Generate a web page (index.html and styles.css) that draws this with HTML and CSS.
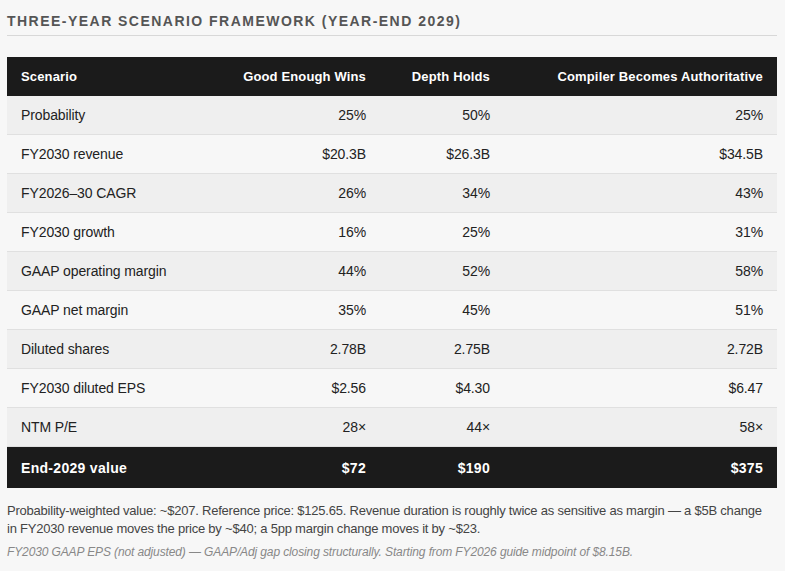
FILE: index.html
```html
<!DOCTYPE html>
<html lang="en">
<head>
<meta charset="utf-8">
<title>Three-Year Scenario Framework</title>
<link rel="stylesheet" href="styles.css">
</head>
<body>
<section class="panel">
  <h2 class="title">Three-Year Scenario Framework (Year-End 2029)</h2>
  <table class="scen">
    <colgroup>
      <col class="c1"><col class="c2"><col class="c3"><col class="c4">
    </colgroup>
    <thead>
      <tr><th class="lbl">Scenario</th><th>Good Enough Wins</th><th>Depth Holds</th><th>Compiler Becomes Authoritative</th></tr>
    </thead>
    <tbody>
      <tr><td class="lbl">Probability</td><td>25%</td><td>50%</td><td>25%</td></tr>
      <tr><td class="lbl">FY2030 revenue</td><td>$20.3B</td><td>$26.3B</td><td>$34.5B</td></tr>
      <tr><td class="lbl">FY2026–30 CAGR</td><td>26%</td><td>34%</td><td>43%</td></tr>
      <tr><td class="lbl">FY2030 growth</td><td>16%</td><td>25%</td><td>31%</td></tr>
      <tr><td class="lbl">GAAP operating margin</td><td>44%</td><td>52%</td><td>58%</td></tr>
      <tr><td class="lbl">GAAP net margin</td><td>35%</td><td>45%</td><td>51%</td></tr>
      <tr><td class="lbl">Diluted shares</td><td>2.78B</td><td>2.75B</td><td>2.72B</td></tr>
      <tr><td class="lbl">FY2030 diluted EPS</td><td>$2.56</td><td>$4.30</td><td>$6.47</td></tr>
      <tr><td class="lbl">NTM P/E</td><td>28×</td><td>44×</td><td>58×</td></tr>
    </tbody>
    <tfoot>
      <tr><td class="lbl">End-2029 value</td><td>$72</td><td>$190</td><td>$375</td></tr>
    </tfoot>
  </table>
  <p class="note">Probability-weighted value: ~$207. Reference price: $125.65. Revenue duration is roughly twice as sensitive as margin — a $5B change in FY2030 revenue moves the price by ~$40; a 5pp margin change moves it by ~$23.</p>
  <p class="fine">FY2030 GAAP EPS (not adjusted) — GAAP/Adj gap closing structurally. Starting from FY2026 guide midpoint of $8.15B.</p>
</section>
</body>
</html>
```

FILE: styles.css
```css
html, body {
  margin: 0;
  padding: 0;
  background: #f7f7f7;
}
body {
  font-family: "Liberation Sans", Arial, sans-serif;
  color: #1a1a1a;
}
.panel {
  padding: 13px 8px 0 7px;
}
.title {
  margin: 0;
  padding: 0 0 6px 0;
  font-size: 14px;
  font-weight: 700;
  letter-spacing: 1.47px;
  text-transform: uppercase;
  color: #555;
  border-bottom: 1px solid #d8d8d8;
  line-height: 16px;
}
.scen {
  width: 100%;
  margin-top: 21px;
  border-collapse: collapse;
  font-size: 14px;
}
.c3 { width: 124px; }
.c4 { width: 273px; }
.c1 { width: 200px; }
.scen th, .scen td {
  height: 38px;
  padding: 0 14px;
  text-align: right;
  line-height: 16px;
}
.scen .lbl { text-align: left; }
.scen thead tr {
  background: #1b1b1b;
  color: #fff;
}
.scen th {
  font-weight: 700;
  font-size: 13px;
  letter-spacing: 0.15px;
  height: 39px;
}
.scen tbody td {
  border-bottom: 1px solid #e0e0e0;
  color: #222;
  letter-spacing: -0.1px;
}
.scen tbody tr:nth-child(odd) { background: #efefef; }
.scen tbody tr:nth-child(even) { background: #f7f7f7; }
.scen tfoot tr {
  background: #1b1b1b;
  color: #fff;
}
.scen tfoot td {
  font-weight: 700;
  letter-spacing: 0.3px;
  height: 41px;
}
.note {
  margin: 14px 0 0 0;
  padding-right: 8px;
  font-size: 13px;
  line-height: 18px;
  letter-spacing: -0.22px;
  color: #444;
}
.fine {
  margin: 6px 0 0 0;
  font-size: 12px;
  line-height: 16px;
  letter-spacing: -0.12px;
  font-style: italic;
  color: #888;
}
```
